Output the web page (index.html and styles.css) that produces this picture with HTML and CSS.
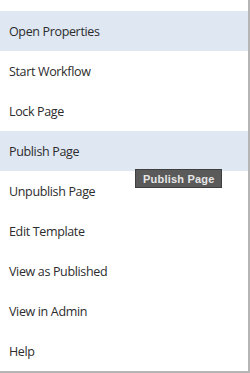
FILE: index.html
```html
<!DOCTYPE html>
<html lang="en">
<head>
    <meta charset="UTF-8">
    <meta name="viewport" content="width=device-width, initial-scale=1.0">
    <title>Page Actions</title>
    <link rel="stylesheet" href="styles.css">
</head>
<body>

<div class="menu">
    <ul class="menu-list">
        <li class="menu-item active">Open Properties</li>
        <li class="menu-item">Start Workflow</li>
        <li class="menu-item">Lock Page</li>
        <li class="menu-item active">
            Publish Page
            <span class="tooltip">Publish Page</span>
        </li>
        <li class="menu-item">Unpublish Page</li>
        <li class="menu-item">Edit Template</li>
        <li class="menu-item">View as Published</li>
        <li class="menu-item">View in Admin</li>
        <li class="menu-item">Help</li>
    </ul>
</div>

</body>
</html>
```

FILE: styles.css
```css
body {
    margin: 0;
    padding: 0;
    background: #fff;
    font-family: "Open Sans", "Noto Sans", sans-serif;
}
.menu {
    width: 250px;
    height: 373px;
    box-sizing: border-box;
    border-right: 2px solid #b5b5b5;
    border-bottom: 2px solid #b5b5b5;
    background: #fff;
}
.menu-list {
    list-style: none;
    margin: 0;
    padding: 11px 0 0 0;
}
.menu-item {
    position: relative;
    height: 40px;
    display: flex;
    align-items: center;
    padding-left: 9px;
    font-size: 12.5px;
    letter-spacing: -0.35px;
    color: #2c2c2c;
}
.menu-item.active {
    background-color: #dfe7f3;
}
.tooltip {
    position: absolute;
    left: 135px;
    top: 38px;
    height: 19px;
    box-sizing: border-box;
    padding: 0 7px;
    display: flex;
    align-items: center;
    background: #5a5a5a;
    border: 1px solid #3f3f3f;
    color: #e6e6e6;
    font-family: "Liberation Sans", Arial, sans-serif;
    font-weight: bold;
    font-size: 11px;
    letter-spacing: 0.2px;
    white-space: nowrap;
    z-index: 2;
}
```
